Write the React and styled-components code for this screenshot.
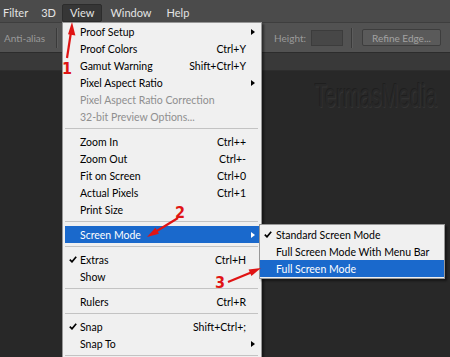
import React from 'react';
import styled, { createGlobalStyle, css } from 'styled-components';

const GlobalStyle = createGlobalStyle`
  html, body {
    margin:0;
    padding:0;
    background:#282828;
  }
  body {
    font-family: Lato, "Liberation Sans", sans-serif;
    font-weight:400;
  }
`

const Screen = styled.div`
  position:relative;
  width:450px;
  height:357px;
  overflow:hidden;
  display:flex;
  flex-direction:column;
  background:#282828;
`

const MenuBar = styled.div`
  height:23px;
  box-sizing:border-box;
  background:#4b4b4b;
  border-bottom:1px solid #3e3e3e;
  display:flex;
  align-items:center;
  padding-left:0;
  margin-left:-4px;
`

const BarItem = styled.div`
  height:18px;
  line-height:16px;
  box-sizing:border-box;
  padding:0 ${props => props.pad || 7}px;
  font-size:11px;
  color:#e4e4e4;
  border:1px solid transparent;
  border-radius:2px;
  margin-top:3px;
  ${props => props.open && css`
    background:#363636;
    border-color:#2c2c2c;
  `}
`

const OptionsBar = styled.div`
  height:30px;
  box-sizing:border-box;
  background:#525252;
  border-bottom:1px solid #2c2c2c;
  display:flex;
  align-items:center;
  padding:0 9px 0 4px;
`

const OptLabel = styled.span`
  font-size:10px;
  color:#9a9a9a;
`

const VSep = styled.div`
  width:1px;
  height:20px;
  background:#3a3a3a;
  box-shadow:1px 0 0 #5c5c5c;
  margin:0 ${props => props.right || 10}px 0 ${props => props.left || 10}px;
`

const Field = styled.div`
  width:32px;
  height:16px;
  box-sizing:border-box;
  background:#474747;
  border:1px solid #3c3c3c;
  margin-left:5px;
`

const RefineButton = styled.div`
  width:79px;
  height:17px;
  box-sizing:border-box;
  background:#5a5a5a;
  border:1px solid #3d3d3d;
  border-radius:2px;
  font-size:10px;
  color:#a2a2a2;
  display:flex;
  align-items:center;
  justify-content:center;
`

const Spacer = styled.div`
  flex-grow:1;
`

const TabStrip = styled.div`
  height:18px;
  box-sizing:border-box;
  background:#393939;
  border-bottom:1px solid #2d2d2d;
`

const Canvas = styled.div`
  flex-grow:1;
  background:#282828;
  display:flex;
  justify-content:flex-end;
  align-items:flex-start;
  padding:7px 13px 0 0;
`

const Watermark = styled.div`
  font-family:"Liberation Sans", sans-serif;
  font-size:34px;
  line-height:1;
  color:#282828;
  text-shadow:-1px -1px 0 #1f1f1f, 1px 1px 0 #343434;
  transform:scaleX(0.6);
  transform-origin:right top;
  white-space:nowrap;
`

const Menu = styled.div`
  position:absolute;
  left:62px;
  top:22px;
  width:200px;
  box-sizing:border-box;
  background:#f0f0f0;
  border:1px solid #979797;
  box-shadow:2px 2px 2px rgba(0,0,0,0.45);
  font-size:10.5px;
  color:#000;
  z-index:2;
`

const Item = styled.div`
  position:relative;
  display:grid;
  grid-template-columns:15px 1fr auto 13px;
  align-items:center;
  height:17px;
  margin:0 2px;
  white-space:nowrap;
  color:${props => props.disabled ? '#8f8f8f' : '#000'};
  ${props => props.active && css`
    background:#1a69cc;
    color:#fff;
  `}
`

const Shortcut = styled.span`
  text-align:right;
`

const SubArrow = styled.span`
  justify-self:center;
  width:0;
  height:0;
  border-top:3.5px solid transparent;
  border-bottom:3.5px solid transparent;
  border-left:4px solid currentColor;
`

const Separator = styled.div`
  height:1px;
  background:#c3c3c3;
  margin:3px 3px 4px 2px;
`

const Submenu = styled.div`
  position:absolute;
  left:100%;
  top:-2px;
  width:186px;
  box-sizing:border-box;
  background:#f0f0f0;
  border:1px solid #979797;
  padding:1px 0;
  box-shadow:2px 2px 2px rgba(0,0,0,0.45);
  color:#000;
`

const SubItem = styled.div`
  display:grid;
  grid-template-columns:16px 1fr;
  align-items:center;
  height:17px;
  white-space:nowrap;
  ${props => props.active && css`
    background:#1a69cc;
    color:#fff;
  `}
`

const CheckCell = styled.span`
  display:flex;
  justify-content:center;
  align-items:center;
`

const Annotations = styled.svg`
  position:absolute;
  left:0;
  top:0;
  pointer-events:none;
  z-index:5;
`

const Check = () => (
  <CheckCell>
    <svg width="8" height="7" viewBox="0 0 8 7">
      <path d="M0.8 3.6 L3 5.8 L7.2 0.8" fill="none" stroke="currentColor" strokeWidth="1.7" />
    </svg>
  </CheckCell>
)

const menuItems = [
  { label: 'Proof Setup', sub: true },
  { label: 'Proof Colors', key: 'Ctrl+Y' },
  { label: 'Gamut Warning', key: 'Shift+Ctrl+Y' },
  { label: 'Pixel Aspect Ratio', sub: true },
  { label: 'Pixel Aspect Ratio Correction', disabled: true },
  { label: '32-bit Preview Options...', disabled: true },
  { sep: true },
  { label: 'Zoom In', key: 'Ctrl++' },
  { label: 'Zoom Out', key: 'Ctrl+-' },
  { label: 'Fit on Screen', key: 'Ctrl+0' },
  { label: 'Actual Pixels', key: 'Ctrl+1' },
  { label: 'Print Size' },
  { sep: true },
  { label: 'Screen Mode', sub: true, active: true, open: true },
  { sep: true },
  { label: 'Extras', key: 'Ctrl+H', checked: true },
  { label: 'Show' },
  { sep: true },
  { label: 'Rulers', key: 'Ctrl+R' },
  { sep: true },
  { label: 'Snap', key: 'Shift+Ctrl+;', checked: true },
  { label: 'Snap To', sub: true },
  { sep: true },
]

const screenModes = [
  { label: 'Standard Screen Mode', checked: true },
  { label: 'Full Screen Mode With Menu Bar' },
  { label: 'Full Screen Mode', active: true },
]

const ScreenModeMenu = () => (
  <Submenu>
    {screenModes.map(m => (
      <SubItem key={m.label} active={m.active}>
        {m.checked ? <Check /> : <span />}
        <span>{m.label}</span>
      </SubItem>
    ))}
  </Submenu>
)

const App = () => {
  return (
    <Screen>
      <GlobalStyle />
      <MenuBar>
        <BarItem pad={6}>Filter</BarItem>
        <BarItem pad={5}>3D</BarItem>
        <BarItem pad={7} open>View</BarItem>
        <BarItem pad={7}>Window</BarItem>
        <BarItem pad={6}>Help</BarItem>
      </MenuBar>
      <OptionsBar>
        <OptLabel>Anti-alias</OptLabel>
        <VSep left={11} right={6} />
        <Spacer />
        <OptLabel>Height:</OptLabel>
        <Field />
        <VSep left={8} right={10} />
        <RefineButton>Refine Edge...</RefineButton>
      </OptionsBar>
      <TabStrip />
      <Canvas>
        <Watermark>TermasMedia</Watermark>
      </Canvas>

      <Menu>
        {menuItems.map((m, i) => m.sep ? (
          <Separator key={i} />
        ) : (
          <Item key={i} active={m.active} disabled={m.disabled}>
            {m.checked ? <Check /> : <span />}
            <span>{m.label}</span>
            <Shortcut>{m.key}</Shortcut>
            {m.sub ? <SubArrow /> : <span />}
            {m.open && <ScreenModeMenu />}
          </Item>
        ))}
      </Menu>

      <Annotations width="450" height="357" viewBox="0 0 450 357">
        <g fill="#e01414" stroke="none">
          <line x1="67" y1="58" x2="71" y2="32" stroke="#e01414" strokeWidth="2.2" />
          <polygon points="72,22 75.4,35.5 68,34.3" />
          <line x1="178" y1="218" x2="156" y2="231.5" stroke="#e01414" strokeWidth="2.2" />
          <polygon points="147,237 159,233.7 155.4,227.7" />
          <line x1="228" y1="282" x2="251" y2="272.5" stroke="#e01414" strokeWidth="2.2" />
          <polygon points="261,268 251.4,275.9 248.6,269.5" />
          <text x="62" y="74" fontFamily="'DejaVu Sans Condensed', 'Liberation Sans', sans-serif" fontWeight="bold" fontSize="16">1</text>
          <text x="175" y="218" fontFamily="'DejaVu Sans Condensed', 'Liberation Sans', sans-serif" fontWeight="bold" fontSize="16">2</text>
          <text x="215" y="288" fontFamily="'DejaVu Sans Condensed', 'Liberation Sans', sans-serif" fontWeight="bold" fontSize="16">3</text>
        </g>
      </Annotations>
    </Screen>
  );
}

export default App;
